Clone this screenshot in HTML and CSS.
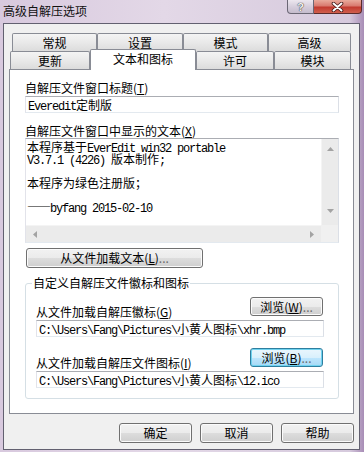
FILE: index.html
```html
<!DOCTYPE html>
<html lang="zh-CN">
<head>
  <meta charset="UTF-8">
  <meta name="viewport" content="width=device-width, initial-scale=1.0">
  <title>高级自解压选项</title>
  <link rel="stylesheet" href="styles.css">
</head>
<body>
  <div class="window">
    <div class="titlebar">
      <span class="title">高级自解压选项</span>
      <div class="caption-btns">
        <button class="cap-help">?</button>
        <button class="cap-close">
          <svg width="13" height="10" viewBox="0 0 13 10">
            <path d="M2.5 1.5 L10.5 8.5 M10.5 1.5 L2.5 8.5" stroke="#3e1515" stroke-width="3.6" stroke-linecap="round"/>
            <path d="M2.5 1.5 L10.5 8.5 M10.5 1.5 L2.5 8.5" stroke="#fff" stroke-width="2" stroke-linecap="round"/>
          </svg>
        </button>
      </div>
    </div>

    <div class="client">
      <div class="tabs">
        <div class="tab-row back">
          <div class="tab w85">常规</div>
          <div class="tab w86">设置</div>
          <div class="tab w85">模式</div>
          <div class="tab w83">高级</div>
        </div>
        <div class="tab-row front">
          <div class="tab w80">更新</div>
          <div class="tab w106 active">文本和图标</div>
          <div class="tab w78">许可</div>
          <div class="tab w77">模块</div>
        </div>
      </div>

      <div class="panel">
        <label class="lbl">自解压文件窗口标题(<u>T</u>)</label>
        <div class="edit mono">Everedit<span class="cjk">定制版</span></div>

        <label class="lbl spaced">自解压文件窗口中显示的文本(<u>X</u>)</label>
        <div class="memo">
          <div class="memo-text mono">
            <div class="line"><span class="cjk">本程序基于</span>EverEdit win32 portable</div>
            <div class="line">V3.7.1 (4226) <span class="cjk">版本制作</span>;</div>
            <div class="line"></div>
            <div class="line"><span class="cjk">本程序为绿色注册版；</span></div>
            <div class="line"></div>
            <div class="line"><span class="cjk dash">——</span>byfang 2015-02-10</div>
          </div>
          <div class="vscroll">
            <svg width="7" height="4" viewBox="0 0 7 4"><path d="M0 4 L3.5 0 L7 4Z" fill="#a3a3a3"/></svg>
            <svg width="7" height="4" viewBox="0 0 7 4"><path d="M0 0 L3.5 4 L7 0Z" fill="#a3a3a3"/></svg>
          </div>
          <div class="hscroll">
            <svg width="4" height="7" viewBox="0 0 4 7"><path d="M4 0 L0 3.5 L4 7Z" fill="#a3a3a3"/></svg>
            <svg width="4" height="7" viewBox="0 0 4 7"><path d="M0 0 L4 3.5 L0 7Z" fill="#a3a3a3"/></svg>
          </div>
          <div class="corner"></div>
        </div>

        <button class="btn load">从文件加载文本(<u>L</u>)<span class="dots">...</span></button>

        <fieldset class="group">
          <legend>自定义自解压文件徽标和图标</legend>
          <div class="pick-row">
            <span class="lbl">从文件加载自解压徽标(<u>G</u>)</span>
            <button class="btn browse">浏览(<u>W</u>)<span class="dots">...</span></button>
          </div>
          <div class="edit mono">C:\Users\Fang\Pictures\<span class="cjk">小黄人图标</span>\xhr.bmp</div>

          <div class="pick-row spaced">
            <span class="lbl">从文件加载自解压文件图标(<u>I</u>)</span>
            <button class="btn browse focus">浏览(<u>B</u>)<span class="dots">...</span></button>
          </div>
          <div class="edit mono">C:\Users\Fang\Pictures\<span class="cjk">小黄人图标</span>\12.ico</div>
        </fieldset>
      </div>

      <div class="footer">
        <button class="btn">确定</button>
        <button class="btn">取消</button>
        <button class="btn">帮助</button>
      </div>
    </div>
  </div>
</body>
</html>
```

FILE: styles.css
```css
* {
  box-sizing: border-box;
}

body {
  margin: 0;
  font: 12px/14px "Noto Sans CJK SC", "Liberation Sans", sans-serif;
  color: #000;
}

.window {
  width: 364px;
  height: 452px;
  padding: 0 4px 2px 3px;
  display: flex;
  flex-direction: column;
  background: linear-gradient(to right, #d8c9de, #e3d8e7 45%, #d6cadd 96%, #a88db6);
}

/* title bar */
.titlebar {
  height: 23px;
  display: flex;
  align-items: flex-start;
}

.title {
  flex: 1;
  padding-top: 4px;
  line-height: 14px;
  color: #111;
}

.caption-btns {
  display: flex;
  margin-right: -2px;
}

.caption-btns button {
  height: 14px;
  padding: 0;
  border-top: none;
  display: flex;
  align-items: center;
  justify-content: center;
}

.cap-help {
  width: 27px;
  border: 1px solid #6b6775;
  border-radius: 0 0 0 4px;
  background: linear-gradient(#ece7ef, #d6cedc 50%, #c5bccd);
  font: bold 11px/12px "Liberation Sans", sans-serif;
  color: #f4f4f4;
  text-shadow: 0 0 1px #333, 0 0 1px #333;
}

.cap-close {
  width: 48px;
  border: 1px solid #5b2b2b;
  border-left: none;
  border-radius: 0 0 4px 0;
  background: linear-gradient(#e9aa9c, #d97a6f 45%, #c23a2f 55%, #d0604e);
}

/* client area */
.client {
  flex: 1;
  border: 1px solid #626070;
  background: #f0f0f0;
  padding: 9px 5px 0 5px;
  display: flex;
  flex-direction: column;
}

.tabs {
  display: flex;
  flex-direction: column;
}

.tab-row {
  display: flex;
  height: 18px;
}

.tab-row.back {
  padding-left: 3px;
}

.tab-row.front {
  padding-left: 1px;
}

.tab {
  height: 18px;
  border: 1px solid #898c95;
  border-bottom: none;
  border-radius: 2px 2px 0 0;
  background: linear-gradient(#f4f4f4, #e9e9e9 50%, #dcdcdc);
  text-align: center;
  line-height: 17px;
}

.w77 { width: 77px; }
.w78 { width: 78px; }
.w80 { width: 80px; }
.w83 { width: 83px; }
.w85 { width: 85px; }
.w86 { width: 86px; }
.w106 { width: 106px; }

.tab.active {
  position: relative;
  z-index: 1;
  height: 21px;
  margin-top: -2px;
  background: #fff;
  line-height: 18px;
}

.panel {
  height: 345px;
  border: 1px solid #898c95;
  background: #fff;
  padding: 11px 14px 0 15px;
  display: flex;
  flex-direction: column;
}

.lbl {
  display: block;
  height: 14px;
  line-height: 14px;
  white-space: nowrap;
}

.lbl.spaced {
  margin-top: 11px;
}

.mono {
  font-family: "Liberation Mono", "Noto Sans CJK SC", monospace;
  letter-spacing: -1.2px;
}

.cjk {
  font-family: "Noto Sans CJK SC", sans-serif;
  letter-spacing: 0;
}

.dash {
  letter-spacing: 1px;
  margin-right: -2px;
}

.dots {
  color: #6d6d6d;
}

.edit {
  height: 17px;
  margin-top: 1px;
  padding: 0 2px;
  border: 1px solid;
  border-color: #abadb3 #dbdfe6 #e3e9ef #e2e3ea;
  background: #fff;
  line-height: 15px;
  white-space: nowrap;
}

/* multi line text */
.memo {
  height: 105px;
  border: 1px solid;
  border-color: #abadb3 #dbdfe6 #e3e9ef #e2e3ea;
  background: #fff;
  display: grid;
  grid-template-columns: 1fr 17px;
  grid-template-rows: 1fr 17px;
}

.memo-text {
  padding: 2px 1px;
}

.memo-text .line {
  height: 12px;
  line-height: 12px;
  white-space: pre;
}

.vscroll {
  background: #ebebeb;
  border-left: 1px solid #f4f4f4;
  display: flex;
  flex-direction: column;
  align-items: center;
  justify-content: space-between;
  padding: 8px 0 12px;
}

.hscroll {
  background: #ebebeb;
  border-top: 1px solid #f4f4f4;
  display: flex;
  align-items: center;
  justify-content: space-between;
  padding: 0 7px;
}

.corner {
  background: #f0f0f0;
}

/* buttons */
.btn {
  height: 20px;
  width: 73px;
  padding: 0;
  border: 1px solid #707070;
  border-radius: 3px;
  background: linear-gradient(#f2f2f2, #ebebeb 50%, #dddddd 51%, #cfcfcf);
  box-shadow: inset 0 0 0 1px #fbfbfb;
  font: 12px/16px "Noto Sans CJK SC", "Liberation Sans", sans-serif;
  color: #000;
}

.btn.load {
  width: 177px;
  margin-top: 5px;
  margin-left: 1px;
  align-self: flex-start;
}

.btn.browse {
  height: 19px;
  margin-right: 1px;
  margin-bottom: 3px;
}

.btn.focus {
  border-color: #2f7e9f;
  background: linear-gradient(#eaf6fd, #d9f0fc 50%, #bee6fd 51%, #a7d9f5);
  box-shadow: inset 0 0 0 1px #6fd3f0;
}

/* group box */
.group {
  margin: 8px 0 0;
  padding: 7px 14px 10px 10px;
  border: 1px solid #d5dfe5;
  border-radius: 3px;
  min-width: 0;
}

.group legend {
  margin-left: -4px;
  padding: 0 1px;
  line-height: 14px;
}

.pick-row {
  display: flex;
  justify-content: space-between;
  align-items: flex-end;
}

.pick-row.spaced {
  margin-top: 11px;
}

.footer {
  display: flex;
  justify-content: flex-end;
  gap: 8px;
  margin-top: 9px;
}
```
